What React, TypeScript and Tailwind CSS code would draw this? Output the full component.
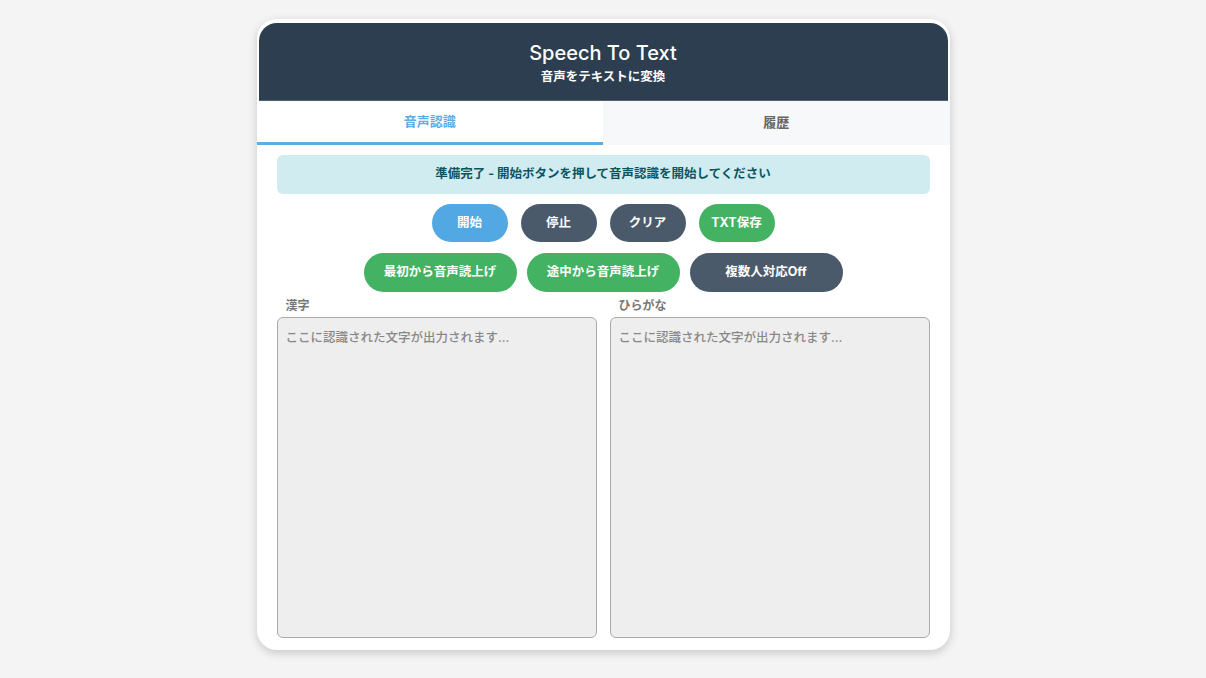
import React from 'react';

const font = { fontFamily: '"Inter", "Noto Sans CJK JP", sans-serif' };

function Pill({ label, color, wide }: { label: string; color: string; wide?: boolean }) {
  return (
    <button
      className={`${wide ? 'w-[153px] h-[39px]' : 'w-[76px] h-[38px]'} ${color} rounded-full text-white text-[12.5px] font-bold flex items-center justify-center`}
    >
      {label}
    </button>
  );
}

function TextPane({ label }: { label: string }) {
  return (
    <div className="flex flex-col flex-1">
      <div className="text-[12px] font-bold text-[#777] pl-[9px] h-[17px] leading-[17px]">{label}</div>
      <textarea
        readOnly
        placeholder="ここに認識された文字が出力されます..."
        className="mt-[3px] h-[321px] w-full resize-none rounded-[6px] border border-[#aaa] bg-[#eeeeee] px-[8px] py-[11px] text-[12.5px] font-medium placeholder:text-[#888] outline-none"
        style={font}
      />
    </div>
  );
}

export default function App() {
  return (
    <div className="min-h-[678px] bg-[#f4f4f4] pt-[19px]" style={font}>
      <div className="mx-auto w-[693px] h-[631px] rounded-[20px] bg-white shadow-[0_3px_10px_rgba(0,0,0,0.18)] overflow-hidden flex flex-col">
        <div className="mt-[4px] mx-[2px] h-[78px] rounded-t-[18px] bg-[#2c3e50] border-b border-[#52606e] flex flex-col items-center justify-center text-white pt-[3px]">
          <div className="text-[20px] font-medium leading-[26px]">Speech To Text</div>
          <div className="text-[12.5px] font-bold leading-[18px] mt-[2px]">音声をテキストに変換</div>
        </div>
        <div className="flex h-[44px]">
          <div className="flex-1 flex items-center justify-center border-b-[3px] border-[#5dade2] text-[13px] font-bold text-[#5dade2] pt-[1px]">
            音声認識
          </div>
          <div className="flex-1 flex items-center justify-center bg-[#f7f8fa] text-[13px] font-bold text-[#666]">
            履歴
          </div>
        </div>
        <div className="px-[20px] pt-[10px] flex flex-col">
          <div className="h-[39px] rounded-[6px] bg-[#d1ecf1] flex items-center justify-center text-[12.5px] font-bold text-[#0c5460]">
            準備完了 - 開始ボタンを押して音声認識を開始してください
          </div>
          <div className="mt-[10px] flex justify-center gap-[13px]">
            <Pill label="開始" color="bg-[#52a8e2]" />
            <Pill label="停止" color="bg-[#4a5a6b]" />
            <Pill label="クリア" color="bg-[#4a5a6b]" />
            <Pill label="TXT保存" color="bg-[#43b262]" />
          </div>
          <div className="mt-[11px] flex justify-center gap-[10px]">
            <Pill label="最初から音声読上げ" color="bg-[#43b262]" wide />
            <Pill label="途中から音声読上げ" color="bg-[#43b262]" wide />
            <Pill label="複数人対応Off" color="bg-[#4a5a6b]" wide />
          </div>
          <div className="mt-[5px] flex gap-[13px]">
            <TextPane label="漢字" />
            <TextPane label="ひらがな" />
          </div>
        </div>
      </div>
    </div>
  );
}
